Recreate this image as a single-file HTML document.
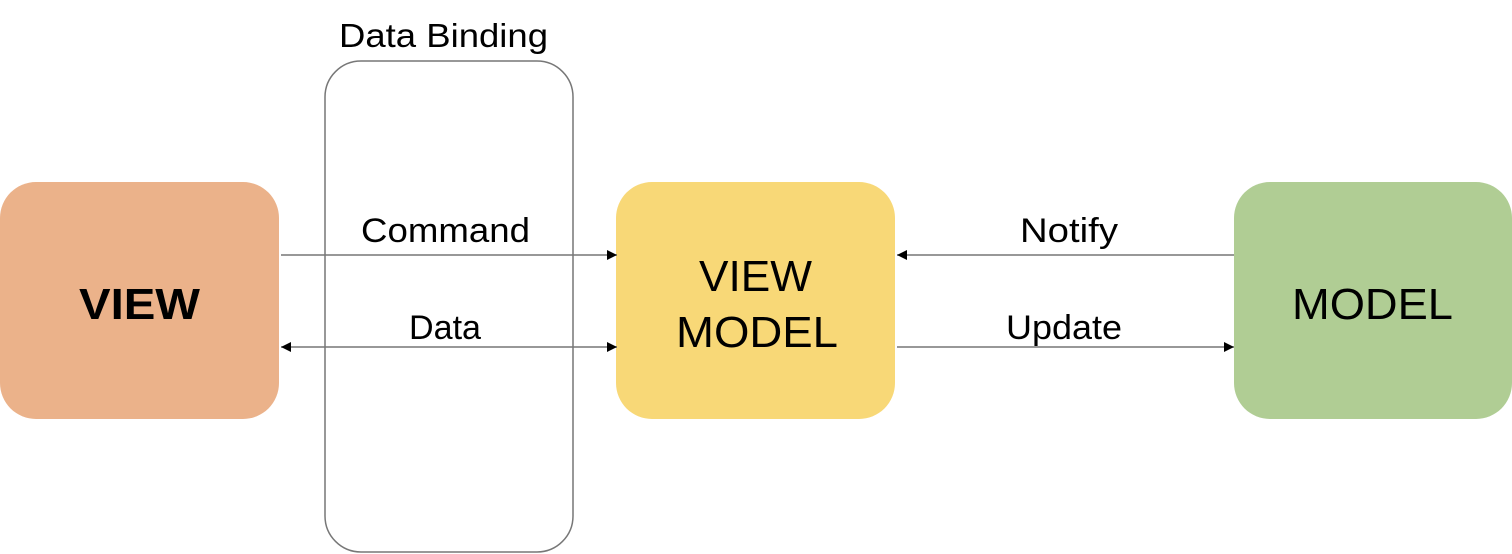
<!DOCTYPE html>
<html><head><meta charset="utf-8"><style>
html,body{margin:0;padding:0;background:#fff;width:1512px;height:554px;overflow:hidden}
svg{display:block}
text{font-family:"Liberation Sans","Noto Sans CJK KR",sans-serif;fill:#000}
</style></head><body>
<svg width="1512" height="554" viewBox="0 0 1512 554">
<defs>
<marker id="a" viewBox="0 0 10 10" refX="10" refY="5" markerWidth="10" markerHeight="10" markerUnits="userSpaceOnUse" orient="auto-start-reverse"><path d="M0 0L10 5L0 10z" fill="#000"/></marker>
</defs>
<rect x="325" y="61" width="248" height="491" rx="36" fill="none" stroke="#777" stroke-width="1.5"/>
<text x="339" y="47" font-size="33" textLength="209" lengthAdjust="spacingAndGlyphs">Data Binding</text>
<rect x="0" y="182" width="279" height="237" rx="36" fill="#EBB28A"/>
<rect x="616" y="182" width="279" height="237" rx="36" fill="#F8D877"/>
<rect x="1234" y="182" width="278" height="237" rx="36" fill="#B0CD94"/>
<text x="79" y="319" font-size="44" font-weight="bold" textLength="121" lengthAdjust="spacingAndGlyphs">VIEW</text>
<text x="699" y="291" font-size="44" textLength="113" lengthAdjust="spacingAndGlyphs">VIEW</text>
<text x="676" y="347" font-size="44" textLength="162" lengthAdjust="spacingAndGlyphs">MODEL</text>
<text x="1292" y="319" font-size="44" textLength="161" lengthAdjust="spacingAndGlyphs">MODEL</text>
<g stroke="#777" stroke-width="1.5">
<line x1="281" y1="255" x2="617" y2="255" marker-end="url(#a)"/>
<line x1="281" y1="347" x2="617" y2="347" marker-start="url(#a)" marker-end="url(#a)"/>
<line x1="1234" y1="255" x2="897" y2="255" marker-end="url(#a)"/>
<line x1="897" y1="347" x2="1234" y2="347" marker-end="url(#a)"/>
</g>
<text x="361" y="242" font-size="34" textLength="169" lengthAdjust="spacingAndGlyphs">Command</text>
<text x="409" y="339" font-size="34" textLength="72" lengthAdjust="spacingAndGlyphs">Data</text>
<text x="1020" y="242" font-size="34" textLength="98" lengthAdjust="spacingAndGlyphs">Notify</text>
<text x="1006" y="339" font-size="34" textLength="116" lengthAdjust="spacingAndGlyphs">Update</text>
</svg>
</body></html>
